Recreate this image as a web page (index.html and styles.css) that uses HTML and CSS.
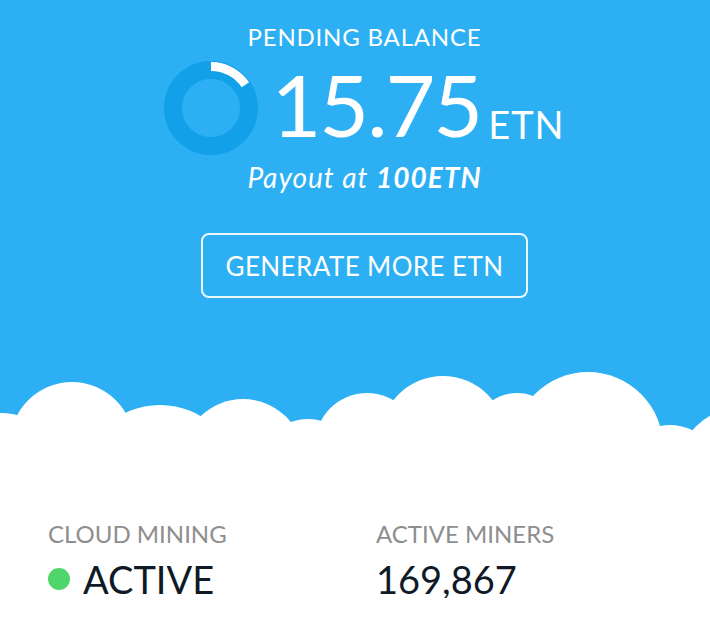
FILE: index.html
```html
<!DOCTYPE html>
<html lang="en">

<head>
   <meta charset="UTF-8">
   <meta name="viewport" content="width=device-width, initial-scale=1.0">
   <title>Cloud Mining</title>
   <link rel="stylesheet" href="styles.css">
</head>

<body>
   <section class="hero">
      <div class="hero-content">
         <div class="label">PENDING BALANCE</div>
         <div class="balance">
            <svg class="progress" width="94" height="94" viewBox="0 0 94 94">
               <circle cx="47" cy="47" r="38" fill="none" stroke="#12a0e9" stroke-width="18" />
               <!-- progress arc, about 16% of the way to payout -->
               <path d="M47 5.5 A41.5 41.5 0 0 1 81.4 23.8" fill="none" stroke="#fff" stroke-width="9" />
            </svg>
            <div class="amount">15.75<span class="unit">ETN</span></div>
         </div>
         <div class="payout">Payout at <b>100ETN</b></div>
         <a class="btn" href="#">GENERATE MORE ETN</a>
      </div>

      <svg class="clouds" width="710" height="90" viewBox="0 360 710 90">
         <g fill="#fff">
            <circle cx="0" cy="483" r="70" />
            <circle cx="72" cy="444" r="62" />
            <circle cx="160" cy="485" r="80" />
            <circle cx="243" cy="460" r="61" />
            <circle cx="308" cy="469" r="50" />
            <circle cx="367" cy="445" r="52" />
            <circle cx="443" cy="439" r="63" />
            <circle cx="517" cy="438" r="45" />
            <circle cx="588" cy="447" r="75" />
            <circle cx="670" cy="475" r="50" />
            <circle cx="740" cy="470" r="62" />
            <rect x="0" y="438" width="710" height="12" />
         </g>
      </svg>
   </section>

   <section class="stats">
      <div class="stat">
         <div class="stat-label">CLOUD MINING</div>
         <div class="stat-value"><span class="dot"></span>ACTIVE</div>
      </div>
      <div class="stat">
         <div class="stat-label">ACTIVE MINERS</div>
         <div class="stat-value">169,867</div>
      </div>
   </section>
</body>

</html>
```

FILE: styles.css
```css
body {
   font-family: Lato, "Open Sans", sans-serif;
   margin: 0;
   background-color: #fff;
}

.hero {
   background-color: #2db0f3;
   color: #fff;
   padding-top: 25px;
}

.hero-content {
   display: flex;
   flex-direction: column;
   align-items: center;
   padding-left: 19px;
}

.label {
   font-size: 24px;
   line-height: 24px;
   letter-spacing: 0.8px;
}

.balance {
   display: flex;
   align-items: flex-start;
   gap: 13px;
   margin-top: 12px;
}

.progress {
   display: block;
}

.amount {
   font-size: 86px;
   line-height: 86px;
   letter-spacing: -2px;
}

.unit {
   font-size: 38px;
   line-height: 1;
   letter-spacing: 1px;
   margin-left: 7px;
   vertical-align: -2px;
}

.payout {
   font-size: 28px;
   line-height: 28px;
   font-style: italic;
   letter-spacing: 1px;
   margin-top: 8px;
}

.payout b {
   font-weight: 700;
}

.btn {
   display: block;
   box-sizing: border-box;
   width: 327px;
   height: 65px;
   margin-top: 42px;
   padding-top: 2px;
   border: 2px solid rgba(255, 255, 255, 0.9);
   border-radius: 8px;
   color: #fff;
   text-decoration: none;
   text-align: center;
   font-size: 26px;
   line-height: 59px;
   letter-spacing: 0.4px;
}

.clouds {
   display: block;
   margin-top: 62px;
}

.stats {
   display: grid;
   grid-template-columns: 328px 1fr;
   padding: 71px 0 0 48px;
}

.stat-label {
   font-size: 24px;
   line-height: 25px;
   color: #8e8e8e;
}

.stat-value {
   display: flex;
   align-items: center;
   margin-top: 14px;
   font-size: 38px;
   line-height: 38px;
   color: #0f1a26;
}

.dot {
   width: 22px;
   height: 22px;
   border-radius: 50%;
   background-color: #4fd66a;
   margin-right: 13px;
}
```
